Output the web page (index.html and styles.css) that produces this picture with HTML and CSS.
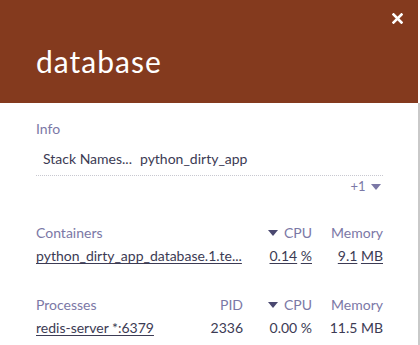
FILE: index.html
```html
<!DOCTYPE html>
<html>
<head>
<meta charset="utf-8">
<link rel="stylesheet" href="styles.css">
</head>
<body>
<div class="panel">
  <header class="head">
    <button class="close" aria-label="close">
      <svg width="11" height="11" viewBox="0 0 11 11"><path d="M1.5 1.5 L9.5 9.5 M9.5 1.5 L1.5 9.5" stroke="#fff" stroke-width="2.6" stroke-linecap="square"/></svg>
    </button>
    <h1 class="title">database</h1>
  </header>
  <div class="body">
    <section class="info">
      <div class="label">Info</div>
      <div class="kv">
        <span class="key">Stack Names...</span>
        <span class="val">python_dirty_app</span>
      </div>
      <div class="more">+1 <span class="caret"></span></div>
    </section>
    <section class="table t3">
      <div class="th">Containers</div>
      <div class="th r"><span class="caret"></span> CPU</div>
      <div class="th r">Memory</div>
      <div class="td"><a class="link">python_dirty_app_database.1.te...</a></div>
      <div class="td r"><a class="link">0.14</a> <a class="link">%</a></div>
      <div class="td r"><a class="link">9.1</a> <a class="link">MB</a></div>
    </section>
    <section class="table t4">
      <div class="th">Processes</div>
      <div class="th r">PID</div>
      <div class="th r"><span class="caret"></span> CPU</div>
      <div class="th r">Memory</div>
      <div class="td"><a class="link">redis-server *:6379</a></div>
      <div class="td r">2336</div>
      <div class="td r">0.00 %</div>
      <div class="td r">11.5 MB</div>
    </section>
  </div>
</div>
</body>
</html>
```
FILE: styles.css
```css
* { box-sizing: border-box; }
html, body { margin: 0; padding: 0; background: #fff; }
body {
  font-family: Lato, "Noto Sans", sans-serif;
  font-size: 14px;
  color: #3c3b54;
}
.panel {
  width: 420px;
  height: 345px;
  position: relative;
  overflow: hidden;
}
.head {
  background: #843a1e;
  height: 103px;
  width: 418px;
  padding: 43px 36px 0;
  position: relative;
}
.title {
  margin: 0;
  color: #fff;
  font-weight: 400;
  font-size: 30px;
  line-height: 36px;
  letter-spacing: 1px;
}
.close {
  position: absolute;
  top: 13px;
  right: 15px;
  background: none;
  border: 0;
  padding: 0;
  width: 11px;
  height: 11px;
  display: block;
}
.close svg { display: block; }
.body {
  width: 420px;
  height: 242px;
  border-right: 2px solid #c9c9c9;
  padding: 16px 35px 0 36px;
}
.label, .th { color: #7b78a6; }
.info .label { line-height: 20px; }
.kv {
  margin-top: 10px;
  padding-left: 7px;
  display: flex;
  gap: 8px;
  line-height: 20px;
  padding-bottom: 6px;
  border-bottom: 1px dotted #c8c8d0;
}
.more {
  text-align: right;
  color: #7b78a6;
  font-size: 13px;
  line-height: 18px;
  margin-top: 1px;
}
.caret {
  display: inline-block;
  width: 0; height: 0;
  border-left: 5px solid transparent;
  border-right: 5px solid transparent;
  border-top: 6px solid #5a5880;
  vertical-align: middle;
  margin-right: 2px;
  position: relative;
  top: -1px;
}
.more .caret { border-top-color: #7b78a6; margin-left: 2px; }
.table {
  display: grid;
  row-gap: 3px;
  line-height: 20px;
}
.t3 { grid-template-columns: 1fr 69px 71px; margin-top: 28px; }
.t4 { grid-template-columns: 1fr 60px 69px 71px; margin-top: 29px; }
.r { text-align: right; }
.th .caret { border-top-color: #4a4870; }
.td { color: #3c3b54; white-space: nowrap; }
.link { color: #3c3b54; text-decoration: underline; text-underline-offset: 2px; }
```
